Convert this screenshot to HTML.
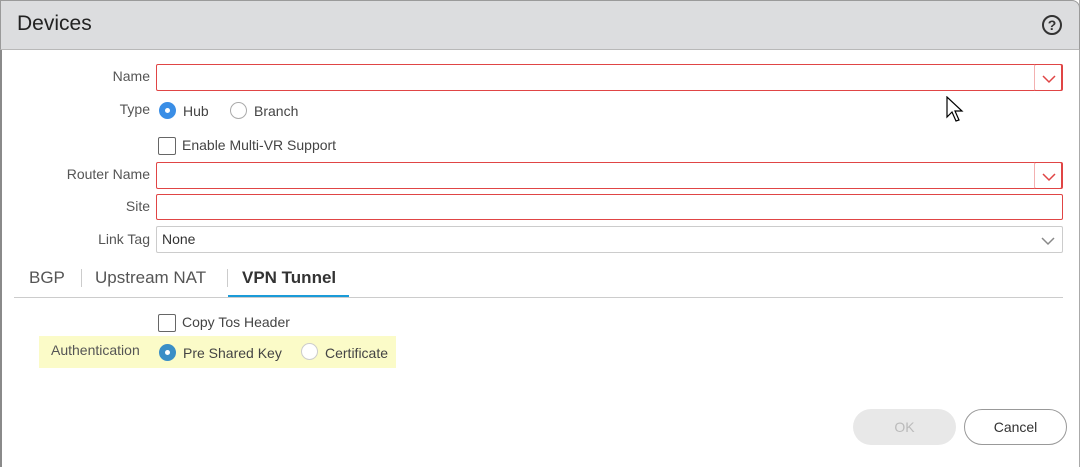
<!DOCTYPE html><html><head><style>
*{box-sizing:border-box}body{margin:0;width:1082px;height:467px;background:#fff;font-family:"Liberation Sans",sans-serif;position:relative;overflow:hidden;color:#333}
.a{position:absolute}
.hdr{left:0;top:0;width:1080px;height:50px;background:#dcdddf;border:1px solid #9a9a9a;border-bottom:1px solid #b8b8b8;border-radius:0 8px 0 0}
.frame{left:0;top:0;width:1080px;height:467px;border-left:2px solid #8a8a8a;border-right:1px solid #aaa}
.lbl{font-size:14px;color:#555;text-align:right;width:150px;left:0}
.inp{left:156px;width:907px;height:27px;border:1px solid #e04545;border-radius:2px}
.chev{right:0;top:-1px;width:28px;height:27px;border:1px solid #e04545;border-left-color:#f3b0b0;border-radius:2px;background:#fff}
.t{font-size:14px;color:#444}
.rad{width:17px;height:17px;border-radius:50%;border:1px solid #aaa;background:#fff}
.cb{width:18px;height:18px;border:1px solid #666;border-radius:2px;background:#fff}
</style></head><body>
<div class="a frame"></div>
<div class="a hdr"></div>
<div class="a" style="left:17px;top:12px;font-size:21px;color:#222">Devices</div>
<div class="a" style="left:1042px;top:15px;width:20px;height:20px;border:2px solid #333;border-radius:50%;font-size:14px;font-weight:bold;text-align:center;line-height:16px;color:#333">?</div>

<div class="a lbl" style="top:68px">Name</div>
<div class="a inp" style="top:64px"><div class="a chev"><svg width="28" height="27"><path d="M8 11l6 6 6-6" fill="none" stroke="#e04545" stroke-width="1.5"/></svg></div></div>
<svg class="a" style="left:946px;top:96px" width="20" height="30"><path d="M1 1v20l5-5 4 9 3-1-4-9h7z" fill="#fff" stroke="#000" stroke-width="1.2"/></svg>

<div class="a lbl" style="top:101px">Type</div>
<div class="a rad" style="left:159px;top:102px;background:#3a8ee6;border-color:#3a8ee6"><div class="a" style="left:5px;top:5px;width:5px;height:5px;background:#fff;border-radius:50%"></div></div>
<div class="a t" style="left:183px;top:103px">Hub</div>
<div class="a rad" style="left:230px;top:102px"></div>
<div class="a t" style="left:254px;top:103px">Branch</div>
<div class="a cb" style="left:158px;top:137px"></div>
<div class="a t" style="left:182px;top:137px">Enable Multi-VR Support</div>

<div class="a lbl" style="top:166px">Router Name</div>
<div class="a inp" style="top:162px"><div class="a chev"><svg width="28" height="27"><path d="M8 11l6 6 6-6" fill="none" stroke="#e04545" stroke-width="1.5"/></svg></div></div>
<div class="a lbl" style="top:198px">Site</div>
<div class="a inp" style="top:194px;height:26px"></div>
<div class="a lbl" style="top:231px">Link Tag</div>
<div class="a inp" style="top:226px;border-color:#ccc"><div class="a t" style="left:5px;top:4px;font-size:14px;color:#333">None</div><svg class="a" style="right:0;top:0" width="28" height="26"><path d="M8 11l6 6 6-6" fill="none" stroke="#888" stroke-width="1.5"/></svg></div>

<div class="a" style="left:29px;top:268px;font-size:17px;color:#555">BGP</div>
<div class="a" style="left:81px;top:269px;width:1px;height:18px;background:#ccc"></div>
<div class="a" style="left:95px;top:268px;font-size:17px;color:#555">Upstream NAT</div>
<div class="a" style="left:227px;top:269px;width:1px;height:18px;background:#ccc"></div>
<div class="a" style="left:242px;top:268px;font-size:17px;font-weight:bold;color:#333">VPN Tunnel</div>
<div class="a" style="left:14px;top:297px;width:1049px;height:1px;background:#ccc"></div>
<div class="a" style="left:228px;top:295px;width:121px;height:2px;background:#1a9bd8"></div>

<div class="a cb" style="left:158px;top:314px"></div>
<div class="a t" style="left:182px;top:314px">Copy Tos Header</div>
<div class="a" style="left:39px;top:336px;width:357px;height:32px;background:#fbfbc8"></div>
<div class="a" style="left:51px;top:342px;font-size:14px;color:#555">Authentication</div>
<div class="a rad" style="left:159px;top:344px;background:#3a8ec6;border-color:#3a8ec6"><div class="a" style="left:5px;top:5px;width:5px;height:5px;background:#fff;border-radius:50%"></div></div>
<div class="a t" style="left:183px;top:345px">Pre Shared Key</div>
<div class="a rad" style="left:301px;top:343px;border-color:#ccc"></div>
<div class="a t" style="left:325px;top:345px">Certificate</div>

<div class="a" style="left:853px;top:409px;width:103px;height:36px;border-radius:18px;background:#e8e8e8;color:#bbb;font-size:14px;text-align:center;line-height:36px">OK</div>
<div class="a" style="left:964px;top:409px;width:103px;height:36px;border-radius:18px;border:1px solid #999;color:#333;font-size:14px;text-align:center;line-height:34px">Cancel</div>
</body></html>
